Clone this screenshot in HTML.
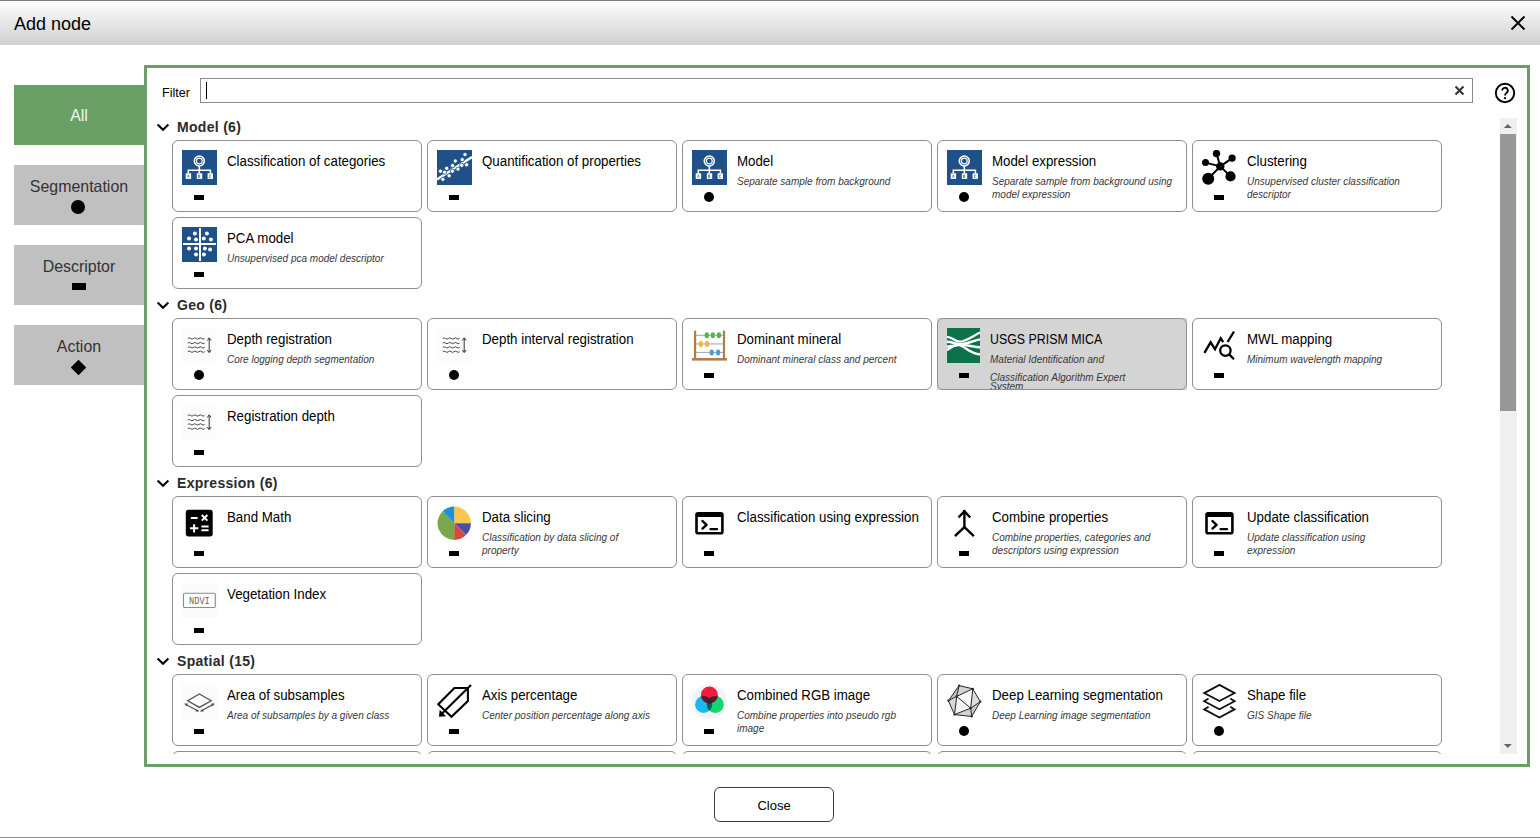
<!DOCTYPE html>
<html><head><meta charset="utf-8"><style>
*{margin:0;padding:0;box-sizing:border-box}
html,body{width:1540px;height:838px;overflow:hidden;background:#fff;font-family:"Liberation Sans", sans-serif;position:relative}
.abs{position:absolute}
#topline{position:absolute;left:0;top:0;width:1540px;height:1px;background:#7d7d7d}
#titlebar{position:absolute;left:0;top:1px;width:1540px;height:44px;background:linear-gradient(#fdfdfd,#f2f2f2 25%,#d0d0d0)}
#title{position:absolute;left:14px;top:12.56px;font-size:18px;line-height:22px;color:#000;white-space:nowrap}
#xclose{position:absolute;left:1510px;top:15px;width:16px;height:16px}
.side{position:absolute;left:14px;width:130px;height:60px;background:#c0c0c0;color:#333;font-size:16.5px;line-height:20px;text-align:center}
.side .lb{position:absolute;left:0;width:130px;white-space:nowrap;transform:scaleX(0.965);transform-origin:50% 0}
#panel{position:absolute;left:144px;top:65px;width:1386px;height:702px;border:3px solid #6aa066;background:#fff}
#filterlb{position:absolute;left:162px;top:85.43px;font-size:12.6px;line-height:16px;color:#000}
#filter{position:absolute;left:200px;top:78px;width:1273px;height:25px;border:1px solid #8a8a8a;background:#fff}
#caret{position:absolute;left:206px;top:82px;width:1px;height:17px;background:#000}
#fx{position:absolute;left:1454px;top:85px;width:11px;height:11px}
#help{position:absolute;left:1494px;top:82px;width:22px;height:22px}
#viewport{position:absolute;left:147px;top:110px;width:1350px;height:644px;overflow:hidden}
#inner{position:absolute;left:-147px;top:-110px;width:1540px;height:838px}
.card{position:absolute;width:250px;height:72px;border:1px solid #8f8f8f;border-radius:6px;overflow:hidden}
.card .ic{position:absolute;left:9px;top:9px;width:35px;height:35px;line-height:0}
.card .dash{position:absolute;left:21px;top:53.5px;width:10px;height:5px;background:#000}
.card .dot{position:absolute;left:21px;top:51px;width:10px;height:10px;border-radius:50%;background:#000}
.card .tt{position:absolute;left:54px;top:12.45px;font-size:14px;transform:scaleX(0.95);transform-origin:0 0;line-height:16px;color:#000;white-space:nowrap}
.card .st{position:absolute;left:54px;font-size:10px;line-height:12px;font-style:italic;color:#383838;white-space:nowrap}
.chev{position:absolute;left:156px;width:14px;height:10px}
.sh{position:absolute;left:177px;font-size:14px;line-height:18px;font-weight:bold;letter-spacing:0.3px;color:#2a2a2a;white-space:nowrap}
#sbtrack{position:absolute;left:1500px;top:118px;width:17px;height:636px;background:#efefef}
#sbthumb{position:absolute;left:1500px;top:134px;width:16px;height:277px;background:#979797}
#closebtn{position:absolute;left:714px;top:787px;width:120px;height:35px;border:1px solid #3c3c3c;border-radius:6px;background:#fff}
#closelb{position:absolute;left:714px;width:120px;top:797.50px;font-size:13px;line-height:16px;text-align:center;color:#000}
#bottomline{position:absolute;left:0;top:837px;width:1540px;height:1px;background:#8e8e8e}
</style></head><body>
<div id="topline"></div>
<div id="titlebar"></div>
<div id="title">Add node</div>
<svg id="xclose" viewBox="0 0 16 16"><path d="M1.5 1.5L14.5 14.5M14.5 1.5L1.5 14.5" stroke="#000" stroke-width="1.8"/></svg>

<div class="side" style="top:85px;background:#6aa066;color:#f4f4f4"><div class="lb" style="top:20.38px">All</div></div>
<div class="side" style="top:165px"><div class="lb" style="top:11.18px">Segmentation</div><div style="position:absolute;left:57px;top:35px;width:14px;height:14px;border-radius:50%;background:#000"></div></div>
<div class="side" style="top:245px"><div class="lb" style="top:11.48px">Descriptor</div><div style="position:absolute;left:58px;top:38px;width:14px;height:7px;background:#000"></div></div>
<div class="side" style="top:325px"><div class="lb" style="top:11.18px">Action</div><div style="position:absolute;left:58.5px;top:36.5px;width:11px;height:11px;background:#000;transform:rotate(45deg)"></div></div>

<div id="panel"></div>
<div id="filterlb">Filter</div>
<div id="filter"></div>
<div id="caret"></div>
<svg id="fx" viewBox="0 0 11 11"><path d="M1.5 1.5L9.5 9.5M9.5 1.5L1.5 9.5" stroke="#333" stroke-width="2"/></svg>
<svg id="help" viewBox="0 0 22 22"><circle cx="11" cy="11" r="9.2" fill="none" stroke="#000" stroke-width="1.9"/><path d="M8.2 8.6A2.8 2.8 0 1 1 12.4 11C11.4 11.6 11 12.2 11 13.6" fill="none" stroke="#000" stroke-width="1.8"/><circle cx="11" cy="16.2" r="1.1" fill="#000"/></svg>

<div id="viewport"><div id="inner">
<svg class="chev" style="top:123px" viewBox="0 0 14 10"><path d="M1.6 1.5L7 6.8L12.4 1.5" fill="none" stroke="#000" stroke-width="2"/></svg>
<div class="sh" style="top:117.95px">Model (6)</div>
<div class="card" style="left:172px;top:140px;background:#fff"><div class="ic"><svg width="35" height="35" viewBox="0 0 35 35"><rect width="35" height="35" fill="#1f5088"/>
<circle cx="17.3" cy="11" r="5" fill="none" stroke="#fff" stroke-width="1.6"/><circle cx="17.3" cy="11" r="2.9" fill="none" stroke="#fff" stroke-width="1.1"/>
<path d="M17.3 16V23.5M6.3 23.5V20.2H28.4V23.5" fill="none" stroke="#fff" stroke-width="1.6"/>
<rect x="3.7" y="23.3" width="5.4" height="5.6" fill="#fff"/><rect x="14.8" y="23.3" width="5.4" height="5.6" fill="#fff"/><rect x="25.6" y="23.3" width="5.4" height="5.6" fill="#fff"/>
<path d="M5.6 27.5L6.4 25L7.2 27.5M16.5 25h1.2v2.5h-1.2zM28.8 25h-1.2v2.5h1.2" fill="none" stroke="#1f5088" stroke-width="0.6"/></svg></div><div class="dash"></div><div class="tt">Classification of categories</div></div>
<div class="card" style="left:427px;top:140px;background:#fff"><div class="ic"><svg width="35" height="35" viewBox="0 0 35 35"><rect width="35" height="35" fill="#1f5088"/>
<path d="M0 29.5L35 7" stroke="#fff" stroke-width="2.6"/><circle cx="28" cy="4.5" r="2.1" fill="#fff" stroke="#1f5088" stroke-width="0.8"/><circle cx="25.3" cy="9.7" r="2.1" fill="#fff" stroke="#1f5088" stroke-width="0.8"/><circle cx="18.3" cy="11" r="2.1" fill="#fff" stroke="#1f5088" stroke-width="0.8"/><circle cx="29.6" cy="14.8" r="2.1" fill="#fff" stroke="#1f5088" stroke-width="0.8"/><circle cx="15.6" cy="15.6" r="2.1" fill="#fff" stroke="#1f5088" stroke-width="0.8"/><circle cx="9.7" cy="18.3" r="2.1" fill="#fff" stroke="#1f5088" stroke-width="0.8"/><circle cx="24.7" cy="15.3" r="2.1" fill="#fff" stroke="#1f5088" stroke-width="0.8"/><circle cx="21" cy="19.1" r="2.1" fill="#fff" stroke="#1f5088" stroke-width="0.8"/><circle cx="15.3" cy="21.2" r="2.1" fill="#fff" stroke="#1f5088" stroke-width="0.8"/><circle cx="3.5" cy="21.2" r="2.1" fill="#fff" stroke="#1f5088" stroke-width="0.8"/><circle cx="7.5" cy="22.3" r="2.1" fill="#fff" stroke="#1f5088" stroke-width="0.8"/><circle cx="12.1" cy="25.8" r="2.1" fill="#fff" stroke="#1f5088" stroke-width="0.8"/><circle cx="5.9" cy="29.3" r="2.1" fill="#fff" stroke="#1f5088" stroke-width="0.8"/></svg></div><div class="dash"></div><div class="tt">Quantification of properties</div></div>
<div class="card" style="left:682px;top:140px;background:#fff"><div class="ic"><svg width="35" height="35" viewBox="0 0 35 35"><rect width="35" height="35" fill="#1f5088"/>
<circle cx="17.3" cy="11" r="5" fill="none" stroke="#fff" stroke-width="1.6"/><circle cx="17.3" cy="11" r="2.9" fill="none" stroke="#fff" stroke-width="1.1"/>
<path d="M17.3 16V23.5M6.3 23.5V20.2H28.4V23.5" fill="none" stroke="#fff" stroke-width="1.6"/>
<rect x="3.7" y="23.3" width="5.4" height="5.6" fill="#fff"/><rect x="14.8" y="23.3" width="5.4" height="5.6" fill="#fff"/><rect x="25.6" y="23.3" width="5.4" height="5.6" fill="#fff"/>
<path d="M5.6 27.5L6.4 25L7.2 27.5M16.5 25h1.2v2.5h-1.2zM28.8 25h-1.2v2.5h1.2" fill="none" stroke="#1f5088" stroke-width="0.6"/></svg></div><div class="dot"></div><div class="tt">Model</div><div class="st" style="top:34.73px">Separate sample from background</div></div>
<div class="card" style="left:937px;top:140px;background:#fff"><div class="ic"><svg width="35" height="35" viewBox="0 0 35 35"><rect width="35" height="35" fill="#1f5088"/>
<circle cx="17.3" cy="11" r="5" fill="none" stroke="#fff" stroke-width="1.6"/><circle cx="17.3" cy="11" r="2.9" fill="none" stroke="#fff" stroke-width="1.1"/>
<path d="M17.3 16V23.5M6.3 23.5V20.2H28.4V23.5" fill="none" stroke="#fff" stroke-width="1.6"/>
<rect x="3.7" y="23.3" width="5.4" height="5.6" fill="#fff"/><rect x="14.8" y="23.3" width="5.4" height="5.6" fill="#fff"/><rect x="25.6" y="23.3" width="5.4" height="5.6" fill="#fff"/>
<path d="M5.6 27.5L6.4 25L7.2 27.5M16.5 25h1.2v2.5h-1.2zM28.8 25h-1.2v2.5h1.2" fill="none" stroke="#1f5088" stroke-width="0.6"/></svg></div><div class="dot"></div><div class="tt">Model expression</div><div class="st" style="top:34.73px">Separate sample from background using</div><div class="st" style="top:47.73px">model expression</div></div>
<div class="card" style="left:1192px;top:140px;background:#fff"><div class="ic"><svg width="35" height="35" viewBox="0 0 35 35"><g stroke="#000" stroke-width="2"><path d="M18.3 16.4L14.5 3.5M18.3 16.4L30.1 8.1M18.3 16.4L3.5 12.6M18.3 16.4L6.2 28.8M18.3 16.4L28.5 26.4"/></g>
<circle cx="18.3" cy="16.4" r="4.2"/><circle cx="14.5" cy="3.5" r="3.7"/><circle cx="30.1" cy="8.1" r="3.6"/><circle cx="3.5" cy="12.6" r="3.5"/><circle cx="6.2" cy="28.8" r="6"/><circle cx="28.5" cy="26.4" r="5.1"/></svg></div><div class="dash"></div><div class="tt">Clustering</div><div class="st" style="top:34.73px">Unsupervised cluster classification</div><div class="st" style="top:47.73px">descriptor</div></div>
<div class="card" style="left:172px;top:217px;background:#fff"><div class="ic"><svg width="35" height="35" viewBox="0 0 35 35"><rect width="35" height="35" fill="#1f5088"/>
<path d="M18 1V34M1 17H34" stroke="#fff" stroke-width="2"/><circle cx="12.9" cy="6.5" r="2" fill="#fff"/><circle cx="24.9" cy="6.5" r="2" fill="#fff"/><circle cx="7" cy="11.6" r="2" fill="#fff"/><circle cx="14" cy="12.4" r="2" fill="#fff"/><circle cx="21.8" cy="11.6" r="2" fill="#fff"/><circle cx="28.9" cy="12.4" r="2" fill="#fff"/><circle cx="7" cy="21.5" r="2" fill="#fff"/><circle cx="14" cy="21.5" r="2" fill="#fff"/><circle cx="22.9" cy="21.5" r="2" fill="#fff"/><circle cx="28.1" cy="22.6" r="2" fill="#fff"/><circle cx="14" cy="27.4" r="2" fill="#fff"/><circle cx="21.9" cy="27.4" r="2" fill="#fff"/></svg></div><div class="dash"></div><div class="tt">PCA model</div><div class="st" style="top:34.73px">Unsupervised pca model descriptor</div></div>
<svg class="chev" style="top:301px" viewBox="0 0 14 10"><path d="M1.6 1.5L7 6.8L12.4 1.5" fill="none" stroke="#000" stroke-width="2"/></svg>
<div class="sh" style="top:295.95px">Geo (6)</div>
<div class="card" style="left:172px;top:318px;background:#fff"><div class="ic"><svg width="35" height="35" viewBox="0 0 35 35"><rect width="35" height="35" fill="#fcfcfc"/><path d="M5.8 10.5 q1.4 -1.3 2.8 0 t2.8 0 t2.8 0 t2.8 0 t2.8 0 t2.8 0" fill="none" stroke="#333" stroke-width="0.9"/><path d="M5.8 15.1 q1.4 -1.3 2.8 0 t2.8 0 t2.8 0 t2.8 0 t2.8 0 t2.8 0" fill="none" stroke="#333" stroke-width="0.9"/><path d="M5.8 19.4 q1.4 -1.3 2.8 0 t2.8 0 t2.8 0 t2.8 0 t2.8 0 t2.8 0" fill="none" stroke="#333" stroke-width="0.9"/><path d="M5.8 23.7 q1.4 -1.3 2.8 0 t2.8 0 t2.8 0 t2.8 0 t2.8 0 t2.8 0" fill="none" stroke="#333" stroke-width="0.9"/>
<path d="M27.2 10.5V24" stroke="#333" stroke-width="1"/><path d="M25.3 12.5L27.2 9.8L29.1 12.5M25.3 22L27.2 24.7L29.1 22" fill="none" stroke="#333" stroke-width="1"/></svg></div><div class="dot"></div><div class="tt">Depth registration</div><div class="st" style="top:34.73px">Core logging depth segmentation</div></div>
<div class="card" style="left:427px;top:318px;background:#fff"><div class="ic"><svg width="35" height="35" viewBox="0 0 35 35"><rect width="35" height="35" fill="#fcfcfc"/><path d="M5.8 10.5 q1.4 -1.3 2.8 0 t2.8 0 t2.8 0 t2.8 0 t2.8 0 t2.8 0" fill="none" stroke="#333" stroke-width="0.9"/><path d="M5.8 15.1 q1.4 -1.3 2.8 0 t2.8 0 t2.8 0 t2.8 0 t2.8 0 t2.8 0" fill="none" stroke="#333" stroke-width="0.9"/><path d="M5.8 19.4 q1.4 -1.3 2.8 0 t2.8 0 t2.8 0 t2.8 0 t2.8 0 t2.8 0" fill="none" stroke="#333" stroke-width="0.9"/><path d="M5.8 23.7 q1.4 -1.3 2.8 0 t2.8 0 t2.8 0 t2.8 0 t2.8 0 t2.8 0" fill="none" stroke="#333" stroke-width="0.9"/>
<path d="M27.2 10.5V24" stroke="#333" stroke-width="1"/><path d="M25.3 12.5L27.2 9.8L29.1 12.5M25.3 22L27.2 24.7L29.1 22" fill="none" stroke="#333" stroke-width="1"/></svg></div><div class="dot"></div><div class="tt">Depth interval registration</div></div>
<div class="card" style="left:682px;top:318px;background:#fff"><div class="ic"><svg width="35" height="35" viewBox="0 0 35 35">
<path d="M3 7.3H32M3 24.4H32" stroke="#9ea3b3" stroke-width="1"/><path d="M3 15.9H32" stroke="#c5c9d3" stroke-width="1.6"/>
<rect x="2" y="2.5" width="2.2" height="29" rx="1" fill="#b07c4a"/><rect x="30.9" y="2.5" width="2.2" height="29" rx="1" fill="#b07c4a"/>
<rect x="0" y="30" width="35" height="2.6" fill="#b07c4a"/>
<g fill="#58b14e"><ellipse cx="14.8" cy="7.3" rx="2.2" ry="3"/><ellipse cx="20.8" cy="7.3" rx="2.2" ry="3"/><ellipse cx="26.9" cy="7.3" rx="2.2" ry="3"/></g>
<g fill="#f6b24a"><ellipse cx="8.8" cy="15.9" rx="2.2" ry="3"/><ellipse cx="15.1" cy="15.9" rx="2.2" ry="3"/></g>
<g fill="#4a9fd6"><ellipse cx="19.7" cy="24.4" rx="2.2" ry="3"/><ellipse cx="26.1" cy="24.4" rx="2.2" ry="3"/></g></svg></div><div class="dash"></div><div class="tt">Dominant mineral</div><div class="st" style="top:34.73px">Dominant mineral class and percent</div></div>
<div style="position:absolute;left:937px;top:318px;width:250px;height:72px;background:#d4d4d4"></div><div class="card" style="left:937px;top:318px;background:transparent"><div class="ic"><svg width="35" height="35" viewBox="0 0 35 35"><rect x="0" y="0" width="33" height="35" fill="#0b7249"/>
<g fill="none" stroke="#fff" stroke-width="2.4">
<path d="M0 8.85C5 8.85 8 13.6 13 13.6C19 13.6 26 8 33 4.5"/>
<path d="M0 13.75C5 13.75 9 16.2 14 16.2C20 16.2 27 12.3 33 11.4"/>
<path d="M0 18.6C5 18.4 9 16.8 14 16.8C20 16.8 27 19.2 33 19.2"/>
<path d="M0 22.1C4 19.8 7 16.9 11 16.9C17 16.9 23 26.3 33 26.3"/>
</g></svg></div><div class="dash"></div><div class="tt" style="left:52px;transform:scaleX(0.885)">USGS PRISM MICA</div><div class="st" style="top:34.73px;left:52px">Material Identification and</div><div class="st" style="top:52.73px;left:52px">Classification Algorithm Expert</div><div class="st" style="top:61.83px;left:52px">System</div></div>
<div class="card" style="left:1192px;top:318px;background:#fff"><div class="ic"><svg width="35" height="35" viewBox="0 0 35 35"><g fill="none" stroke="#000" stroke-width="2.3" stroke-linejoin="miter">
<path d="M2.4 24.8L8.6 14.3L13 21.2L18.7 10.3L21.2 14.2"/><path d="M32 3.5L25.6 14"/>
<circle cx="23.4" cy="22.6" r="5.2"/><path d="M27.2 26.4L32 31.2"/></g></svg></div><div class="dash"></div><div class="tt">MWL mapping</div><div class="st" style="top:34.73px">Minimum wavelength mapping</div></div>
<div class="card" style="left:172px;top:395px;background:#fff"><div class="ic"><svg width="35" height="35" viewBox="0 0 35 35"><rect width="35" height="35" fill="#fcfcfc"/><path d="M5.8 10.5 q1.4 -1.3 2.8 0 t2.8 0 t2.8 0 t2.8 0 t2.8 0 t2.8 0" fill="none" stroke="#333" stroke-width="0.9"/><path d="M5.8 15.1 q1.4 -1.3 2.8 0 t2.8 0 t2.8 0 t2.8 0 t2.8 0 t2.8 0" fill="none" stroke="#333" stroke-width="0.9"/><path d="M5.8 19.4 q1.4 -1.3 2.8 0 t2.8 0 t2.8 0 t2.8 0 t2.8 0 t2.8 0" fill="none" stroke="#333" stroke-width="0.9"/><path d="M5.8 23.7 q1.4 -1.3 2.8 0 t2.8 0 t2.8 0 t2.8 0 t2.8 0 t2.8 0" fill="none" stroke="#333" stroke-width="0.9"/>
<path d="M27.2 10.5V24" stroke="#333" stroke-width="1"/><path d="M25.3 12.5L27.2 9.8L29.1 12.5M25.3 22L27.2 24.7L29.1 22" fill="none" stroke="#333" stroke-width="1"/></svg></div><div class="dash"></div><div class="tt">Registration depth</div></div>
<svg class="chev" style="top:479px" viewBox="0 0 14 10"><path d="M1.6 1.5L7 6.8L12.4 1.5" fill="none" stroke="#000" stroke-width="2"/></svg>
<div class="sh" style="top:473.95px">Expression (6)</div>
<div class="card" style="left:172px;top:496px;background:#fff"><div class="ic"><svg width="35" height="35" viewBox="0 0 35 35"><rect x="3.8" y="3.8" width="26.9" height="26.6" rx="2.6" fill="#000"/>
<g stroke="#fff" stroke-width="2" fill="none"><path d="M8.9 12H15.6"/><path d="M19.8 9L25.4 14.6M25.4 9L19.8 14.6"/><path d="M8 22.3H16.3M12.1 18.2V26.4"/><path d="M19.4 20.6H26.6M19.4 24.2H26.6"/></g></svg></div><div class="dash"></div><div class="tt">Band Math</div></div>
<div class="card" style="left:427px;top:496px;background:#fff"><div class="ic"><svg width="35" height="35" viewBox="0 0 35 35"><path d="M17.2 17.2L17.20 0.50A16.7 16.7 0 0 1 33.90 17.20Z" fill="#f9c64f"/><path d="M17.2 17.2L33.90 17.20A16.7 16.7 0 0 1 29.01 29.01Z" fill="#4551a9"/><path d="M17.2 17.2L29.01 29.01A16.7 16.7 0 0 1 17.20 33.90Z" fill="#d94840"/><path d="M17.2 17.2L17.20 33.90A16.7 16.7 0 0 1 5.39 5.39Z" fill="#77a84a"/><path d="M17.2 17.2L5.39 5.39A16.7 16.7 0 0 1 17.20 0.50Z" fill="#1e91d9"/></svg></div><div class="dash"></div><div class="tt">Data slicing</div><div class="st" style="top:34.73px">Classification by data slicing of</div><div class="st" style="top:47.73px">property</div></div>
<div class="card" style="left:682px;top:496px;background:#fff"><div class="ic"><svg width="35" height="35" viewBox="0 0 35 35"><path fill="#000" fill-rule="evenodd" d="M6 5.9H28.9A2.8 2.8 0 0 1 31.7 8.7V25.7A2.8 2.8 0 0 1 28.9 28.5H6A2.8 2.8 0 0 1 3.2 25.7V8.7A2.8 2.8 0 0 1 6 5.9ZM5.8 11V26H29.1V11Z"/>
<g fill="none" stroke="#000" stroke-width="2.4" stroke-linecap="round" stroke-linejoin="round"><path d="M10.5 15.1L14.6 18.8L10.5 22.6"/><path d="M18.6 23.1H25"/></g></svg></div><div class="dash"></div><div class="tt">Classification using expression</div></div>
<div class="card" style="left:937px;top:496px;background:#fff"><div class="ic"><svg width="35" height="35" viewBox="0 0 35 35"><g fill="none" stroke="#000" stroke-width="2.4" stroke-linecap="square">
<path d="M12.4 10.6L17.4 5.3L22.4 10.6"/><path d="M17.4 5.5V21.6"/><path d="M8.8 29.2L17.4 21.2L26 29.2"/></g></svg></div><div class="dash"></div><div class="tt">Combine properties</div><div class="st" style="top:34.73px">Combine properties, categories and</div><div class="st" style="top:47.73px">descriptors using expression</div></div>
<div class="card" style="left:1192px;top:496px;background:#fff"><div class="ic"><svg width="35" height="35" viewBox="0 0 35 35"><path fill="#000" fill-rule="evenodd" d="M6 5.9H28.9A2.8 2.8 0 0 1 31.7 8.7V25.7A2.8 2.8 0 0 1 28.9 28.5H6A2.8 2.8 0 0 1 3.2 25.7V8.7A2.8 2.8 0 0 1 6 5.9ZM5.8 11V26H29.1V11Z"/>
<g fill="none" stroke="#000" stroke-width="2.4" stroke-linecap="round" stroke-linejoin="round"><path d="M10.5 15.1L14.6 18.8L10.5 22.6"/><path d="M18.6 23.1H25"/></g></svg></div><div class="dash"></div><div class="tt">Update classification</div><div class="st" style="top:34.73px">Update classification using</div><div class="st" style="top:47.73px">expression</div></div>
<div class="card" style="left:172px;top:573px;background:#fff"><div class="ic"><svg width="35" height="35" viewBox="0 0 35 35"><rect width="35" height="35" fill="#fbfbfb"/><rect x="1.5" y="10.3" width="31.8" height="14.2" rx="1.2" fill="#fff" stroke="#8a8a8a" stroke-width="1.1"/>
<text x="7" y="21.4" font-family="Liberation Mono" font-size="11" fill="#666" textLength="20.8" lengthAdjust="spacingAndGlyphs">NDVI</text></svg></div><div class="dash"></div><div class="tt">Vegetation Index</div></div>
<svg class="chev" style="top:657px" viewBox="0 0 14 10"><path d="M1.6 1.5L7 6.8L12.4 1.5" fill="none" stroke="#000" stroke-width="2"/></svg>
<div class="sh" style="top:651.95px">Spatial (15)</div>
<div class="card" style="left:172px;top:674px;background:#fff"><div class="ic"><svg width="35" height="35" viewBox="0 0 35 35"><rect width="35" height="35" fill="#fbfbfb"/><g fill="none" stroke="#555" stroke-width="1.3">
<path d="M17.4 10L29.2 16.7L17.4 23.4L5.7 16.7Z"/><path d="M3.4 20.2L16.2 27"/><path d="M18.8 27L31.9 20.2"/></g>
<g fill="#555"><path d="M2.2 19.5L6 19.6L4.5 22.3Z"/><path d="M17.2 27.6L13.4 27.6L14.9 24.9Z"/><path d="M18 27.6L21.8 27.6L20.3 24.9Z"/><path d="M32.8 19.5L29 19.6L30.5 22.3Z"/></g></svg></div><div class="dash"></div><div class="tt">Area of subsamples</div><div class="st" style="top:34.73px">Area of subsamples by a given class</div></div>
<div class="card" style="left:427px;top:674px;background:#fff"><div class="ic"><svg width="35" height="35" viewBox="0 0 35 35"><g fill="none" stroke="#000" stroke-width="2.1" stroke-linejoin="miter">
<path d="M17.4 4H30.9V17L14.5 32.8L1.3 20.2Z"/><path d="M34 0.9L4.5 30"/></g><path d="M2 32.8L2.7 25.8L9 32.2Z" fill="#000"/></svg></div><div class="dash"></div><div class="tt">Axis percentage</div><div class="st" style="top:34.73px">Center position percentage along axis</div></div>
<div class="card" style="left:682px;top:674px;background:#fff"><div class="ic"><svg width="35" height="35" viewBox="0 0 35 35"><defs>
<clipPath id="cr"><circle cx="17.4" cy="10.9" r="8.5"/></clipPath><clipPath id="cb"><circle cx="11.6" cy="20.5" r="8.5"/></clipPath></defs>
<circle cx="17.4" cy="17.6" r="17.4" fill="#f1f4f4"/>
<g fill="#18b8f2"><circle cx="11.6" cy="20.5" r="8.5"/></g><g fill="#12d672"><circle cx="23.3" cy="20.4" r="8.5"/></g><g fill="#f01e3c"><circle cx="17.4" cy="10.9" r="8.5"/></g>
<g clip-path="url(#cr)" fill="#5c1a2c"><circle cx="11.6" cy="20.5" r="8.5"/><circle cx="23.3" cy="20.4" r="8.5"/></g>
<g clip-path="url(#cb)"><g fill="#0b5b5e"><circle cx="23.3" cy="20.4" r="8.5"/></g><g clip-path="url(#cr)" fill="#1b2838"><circle cx="23.3" cy="20.4" r="8.5"/></g></g></svg></div><div class="dash"></div><div class="tt">Combined RGB image</div><div class="st" style="top:34.73px">Combine properties into pseudo rgb</div><div class="st" style="top:47.73px">image</div></div>
<div class="card" style="left:937px;top:674px;background:#fff"><div class="ic"><svg width="35" height="35" viewBox="0 0 35 35"><path d="M12.1 1.6L25.8 4.8L9.7 12.4Z" fill="#d4d4d4"/><path d="M1.35 16.7L9.7 12.4L12.1 1.6Z" fill="#bdbdbd"/><path d="M1.35 16.7L9.7 12.4L7.5 30.6Z" fill="#d9d9d9"/><path d="M9.7 12.4L7.5 30.6L23.7 24.2Z" fill="#f1f3f5"/><path d="M9.7 12.4L25.8 4.8L23.7 24.2Z" fill="#f8f8f8"/><path d="M25.8 4.8L33.3 17.7L23.7 24.2Z" fill="#dedede"/><path d="M33.3 17.7L24.7 32.5L23.7 24.2Z" fill="#c9c9c9"/><path d="M7.5 30.6L23.7 24.2L24.7 32.5Z" fill="#d3d3d3"/><path d="M12.1 1.6L25.8 4.8M25.8 4.8L33.3 17.7M33.3 17.7L24.7 32.5M24.7 32.5L7.5 30.6M7.5 30.6L1.35 16.7M1.35 16.7L12.1 1.6M12.1 1.6L9.7 12.4M9.7 12.4L25.8 4.8M1.35 16.7L9.7 12.4M9.7 12.4L7.5 30.6M9.7 12.4L23.7 24.2M25.8 4.8L23.7 24.2M23.7 24.2L33.3 17.7M23.7 24.2L24.7 32.5M23.7 24.2L7.5 30.6" stroke="#262626" stroke-width="1" fill="none" stroke-linejoin="round"/><circle cx="12.1" cy="1.6" r="1.1" fill="#222"/><circle cx="25.8" cy="4.8" r="1.1" fill="#222"/><circle cx="33.3" cy="17.7" r="1.1" fill="#222"/><circle cx="24.7" cy="32.5" r="1.1" fill="#222"/><circle cx="7.5" cy="30.6" r="1.1" fill="#222"/><circle cx="1.35" cy="16.7" r="1.1" fill="#222"/><circle cx="9.7" cy="12.4" r="1.1" fill="#222"/><circle cx="23.7" cy="24.2" r="1.1" fill="#222"/></svg></div><div class="dot"></div><div class="tt">Deep Learning segmentation</div><div class="st" style="top:34.73px">Deep Learning image segmentation</div></div>
<div class="card" style="left:1192px;top:674px;background:#fff"><div class="ic"><svg width="35" height="35" viewBox="0 0 35 35"><g fill="none" stroke="#111" stroke-width="1.8" stroke-linejoin="miter">
<path d="M17.4 0.9L32.6 9.1L17.4 17.1L2.2 9.1Z"/>
<path d="M6.6 14.6L2.2 17.2L17.4 25.3L32.6 17.2L28.3 14.6"/>
<path d="M6.6 22.8L2.2 25.4L17.4 33.6L32.6 25.4L28.3 22.8"/></g></svg></div><div class="dot"></div><div class="tt">Shape file</div><div class="st" style="top:34.73px">GIS Shape file</div></div>
<div class="card" style="left:172px;top:751px;background:#fff"></div>
<div class="card" style="left:427px;top:751px;background:#fff"></div>
<div class="card" style="left:682px;top:751px;background:#fff"></div>
<div class="card" style="left:937px;top:751px;background:#fff"></div>
<div class="card" style="left:1192px;top:751px;background:#fff"></div>
</div></div>

<div id="sbtrack"></div>
<div id="sbthumb"></div>
<svg class="abs" style="left:1503px;top:123px" width="10" height="6" viewBox="0 0 10 6"><path d="M0.8 5L4.8 0.9L8.8 5Z" fill="#666"/></svg>
<svg class="abs" style="left:1503px;top:743px" width="10" height="6" viewBox="0 0 10 6"><path d="M0.8 1L4.8 5.1L8.8 1Z" fill="#666"/></svg>

<div id="closebtn"></div>
<div id="closelb">Close</div>
<div id="bottomline"></div>
</body></html>
